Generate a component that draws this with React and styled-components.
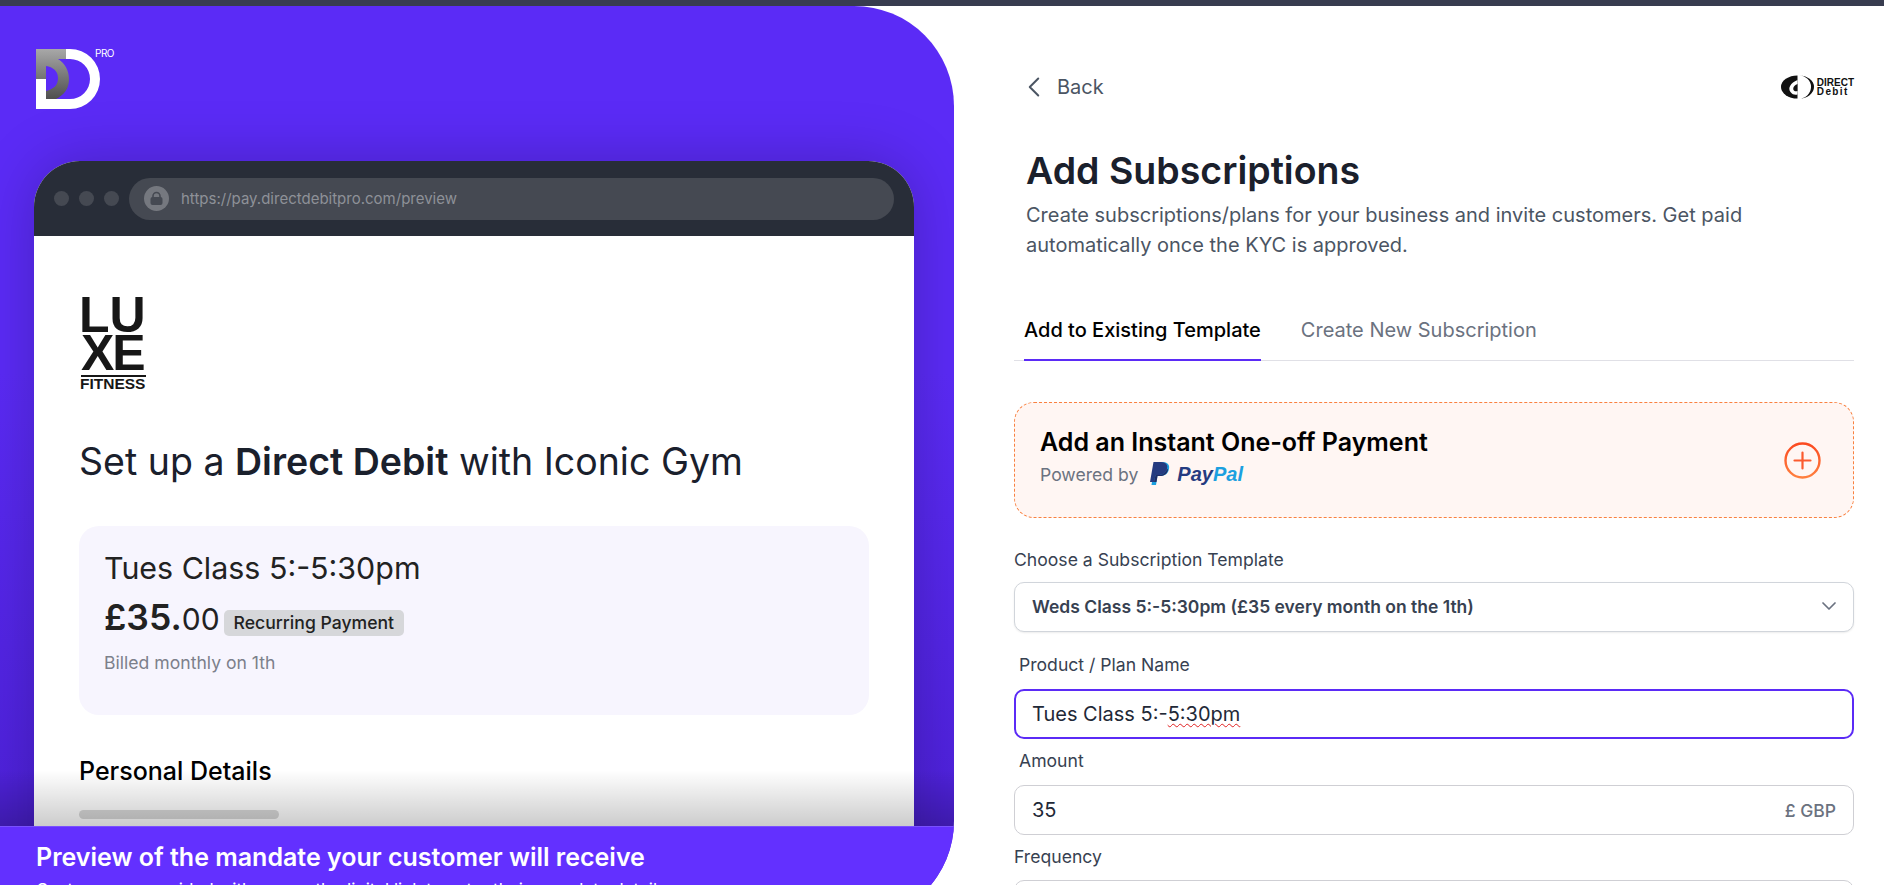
import React from "react";
import styled, { createGlobalStyle } from "styled-components";
import { ChevronLeft, ChevronDown } from "lucide-react";

const GlobalStyle = createGlobalStyle`
  html, body {
    margin: 0;
    height: 885px;
    overflow: hidden;
    background: #fff;
    font-family: Inter, "Liberation Sans", sans-serif;
  }
  * { box-sizing: border-box; }
`;

const App = () => {
  return (
    <Page>
      <GlobalStyle />
      <TopBar />
      <Split>
        <PreviewPanel>
          <BrandLogo>
            <svg width="64" height="60" viewBox="0 0 64 60">
              <defs>
                <linearGradient id="ddGrey" x1="0" y1="0" x2="0" y2="1">
                  <stop offset="0" stopColor="#a8a8a8" />
                  <stop offset="1" stopColor="#4f4f4f" />
                </linearGradient>
              </defs>
              <path d="M30 0H34A30 30 0 0 1 34 60H0V30H10V50H34A20 20 0 0 0 34 10H30Z" fill="#fff" />
              <path d="M0 0H30V10H22C29 14 33 22 33 30C33 40 28 46 20 50H10V42C18 40 22 36 22 29C22 22 17 18 10 17V30H0Z" fill="url(#ddGrey)" />
            </svg>
            <ProBadge>PRO</ProBadge>
          </BrandLogo>
          <BrowserFrame>
            <BrowserBar>
              <Dots>
                <Dot />
                <Dot />
                <Dot />
              </Dots>
              <UrlPill>
                <LockCircle>
                  <svg width="15" height="15" viewBox="0 0 15 15">
                    <path d="M4 6.5V5a3.5 3.5 0 0 1 7 0v1.5" fill="none" stroke="#454952" strokeWidth="1.6" />
                    <rect x="1.5" y="6" width="12" height="8" rx="2" fill="#454952" />
                  </svg>
                </LockCircle>
                <UrlText>https://pay.directdebitpro.com/preview</UrlText>
              </UrlPill>
            </BrowserBar>
            <BrowserBody>
              <LuxeLogo>
                <LuxeBig>LU</LuxeBig>
                <LuxeBig>XE</LuxeBig>
                <LuxeSmall>FITNESS</LuxeSmall>
              </LuxeLogo>
              <Headline>
                Set up a <strong>Direct Debit</strong> with Iconic Gym
              </Headline>
              <SummaryBox>
                <PlanName>Tues Class 5:-5:30pm</PlanName>
                <PriceRow>
                  <Price>
                    £35.<Pence>00</Pence>
                  </Price>
                  <Badge>Recurring Payment</Badge>
                </PriceRow>
                <Billed>Billed monthly on 1th</Billed>
              </SummaryBox>
              <SectionTitle>Personal Details</SectionTitle>
              <Skeleton />
            </BrowserBody>
          </BrowserFrame>
          <Fade />
          <Caption>
            <CaptionTitle>Preview of the mandate your customer will receive</CaptionTitle>
            <CaptionText>Customers are guided with a smooth, digital link to enter their complete details</CaptionText>
          </Caption>
        </PreviewPanel>
        <FormPanel>
          <TopRow>
            <BackLink>
              <ChevronLeft size={34} strokeWidth={1.4} />
              Back
            </BackLink>
            <DebitMark>
              <svg width="35" height="24" viewBox="0 0 34 24">
                <path d="M17 .5A16.5 11.5 0 0 0 17 23.5Z" fill="#111" />
                <path d="M18.5 .5A15 11.5 0 0 1 18.5 23.5A11.5 11 0 0 0 18.5 .5Z" fill="#111" />
                <path d="M17 5C10 8 7 13 10 17C12 20 15 20 17 19.5Z" fill="#fff" />
                <path d="M17 9C14 10 12 12.5 13 15C13.8 16.5 15.5 16.5 17 16Z" fill="#111" />
              </svg>
              <DebitText>
                <span>DIRECT</span>
                <span>Debit</span>
              </DebitText>
            </DebitMark>
          </TopRow>
          <Title>Add Subscriptions</Title>
          <Intro>
            Create subscriptions/plans for your business and invite customers. Get paid automatically once the KYC is
            approved.
          </Intro>
          <Tabs>
            <Tab $active>Add to Existing Template</Tab>
            <Tab>Create New Subscription</Tab>
          </Tabs>
          <PaymentCard>
            <CardText>
              <CardTitle>Add an Instant One-off Payment</CardTitle>
              <PoweredRow>
                Powered by
                <PayPalLogo>
                  <svg width="20" height="24" viewBox="0 0 20 24">
                    <path d="M5 0H12.5C17.5 0 20 3 19 7C18 12 14.5 14 10 14H7.5L6 23H1.5Z" fill="#1ba0e0" />
                    <path d="M3.5 0H11C16 0 18 3 17 6.5C16 11 12.5 13 8 13H5.5L4 20H0Z" fill="#253b80" />
                    <path d="M5.5 13H8C12.5 13 16 11 17 6.5C17.6 7 18 7.5 18 8C17 12 14 14 10 14H7.5L6.5 20H4Z" fill="#222d65" />
                  </svg>
                  <PayWord>
                    Pay<PalPart>Pal</PalPart>
                  </PayWord>
                </PayPalLogo>
              </PoweredRow>
            </CardText>
            <svg width="37" height="37" viewBox="0 0 37 37">
              <defs>
                <linearGradient id="plusRing" x1="0" y1="0" x2="0" y2="1">
                  <stop offset="0" stopColor="#fb4a20" />
                  <stop offset="1" stopColor="#ff7f3e" />
                </linearGradient>
              </defs>
              <circle cx="18.5" cy="18.5" r="17" fill="none" stroke="url(#plusRing)" strokeWidth="2.4" />
              <path d="M10.5 18.5H26.5M18.5 10.5V26.5" stroke="#fb5a2e" strokeWidth="2.2" strokeLinecap="round" />
            </svg>
          </PaymentCard>
          <FieldLabel $top={32} $bottom={12}>
            Choose a Subscription Template
          </FieldLabel>
          <SelectBox>
            <SelectValue>Weds Class 5:-5:30pm (£35 every month on the 1th)</SelectValue>
            <ChevronDown size={24} strokeWidth={1.75} color="#6b7280" />
          </SelectBox>
          <FieldLabel $inset $top={23} $bottom={14}>
            Product / Plan Name
          </FieldLabel>
          <TextBox $focused>
            <span>
              Tues Class 5:-<Misspelt>5:30pm</Misspelt>
            </span>
          </TextBox>
          <FieldLabel $inset $top={12} $bottom={14}>
            Amount
          </FieldLabel>
          <TextBox>
            <span>35</span>
            <Suffix>£ GBP</Suffix>
          </TextBox>
          <FieldLabel $top={12} $bottom={13}>
            Frequency
          </FieldLabel>
          <TextBox />
        </FormPanel>
      </Split>
    </Page>
  );
};

const Page = styled.div`
  height: 885px;
  overflow: hidden;
  display: flex;
  flex-direction: column;
`;
const TopBar = styled.div`
  height: 6px;
  flex: none;
  background: #383c4f;
`;
const Split = styled.div`
  flex: 1;
  min-height: 0;
  display: flex;
  align-items: flex-start;
`;

const PreviewPanel = styled.section`
  position: relative;
  width: 954px;
  flex: none;
  height: 915px;
  overflow: hidden;
  padding: 43px 40px 0 34px;
  background: linear-gradient(180deg, #5b2bf6 0%, #5b2bf6 40%, #4f22dc 85%);
  border-radius: 0 100px 100px 0;
`;
const BrandLogo = styled.div`
  position: relative;
  width: 64px;
  height: 60px;
  margin-left: 2px;
  margin-bottom: 52px;
  svg {
    display: block;
  }
`;
const ProBadge = styled.span`
  position: absolute;
  left: 59px;
  top: -2px;
  font-size: 10px;
  letter-spacing: -0.5px;
  color: #fff;
`;
const BrowserFrame = styled.div`
  width: 880px;
  height: 740px;
  background: #fff;
  border-radius: 46px 46px 0 0;
  overflow: hidden;
  box-shadow: 0 0 60px rgba(0, 0, 0, 0.22);
`;
const BrowserBar = styled.div`
  height: 75px;
  background: #282d38;
  display: flex;
  align-items: center;
  padding: 0 20px;
  gap: 10px;
`;
const Dots = styled.div`
  display: flex;
  gap: 10px;
`;
const Dot = styled.span`
  width: 15px;
  height: 15px;
  border-radius: 50%;
  background: #454952;
`;
const UrlPill = styled.div`
  flex: 1;
  height: 42px;
  border-radius: 21px;
  background: #454952;
  display: flex;
  align-items: center;
  padding-left: 15px;
  gap: 12px;
`;
const LockCircle = styled.span`
  width: 25px;
  height: 25px;
  border-radius: 50%;
  background: #75787f;
  display: flex;
  align-items: center;
  justify-content: center;
`;
const UrlText = styled.span`
  font-size: 15px;
  color: #8e9198;
`;
const BrowserBody = styled.div`
  padding: 60px 45px 0;
`;
const LuxeLogo = styled.div`
  width: 66px;
  margin-left: 2px;
  color: #171717;
  font-family: "Liberation Sans", sans-serif;
  display: flex;
  flex-direction: column;
`;
const LuxeBig = styled.div`
  font-size: 50px;
  line-height: 38px;
  height: 38px;
  font-weight: 700;
  margin-left: -2px;
  white-space: nowrap;
  &:nth-child(2) {
    border-bottom: 2px solid #171717;
    height: 43px;
    margin-left: 0;
    margin-right: 1px;
    letter-spacing: -2px;
  }
`;
const LuxeSmall = styled.div`
  font-size: 15.5px;
  line-height: 14px;
  font-weight: 700;
  margin-left: -1px;
  white-space: nowrap;
`;
const Headline = styled.h2`
  margin: 49px 0 0;
  font-size: 37.5px;
  line-height: 44px;
  font-weight: 400;
  color: #1a202c;
  strong {
    font-weight: 600;
  }
`;
const SummaryBox = styled.div`
  margin-top: 42px;
  height: 189px;
  padding: 22px 25px;
  background: #f7f5fe;
  border-radius: 20px;
`;
const PlanName = styled.div`
  font-size: 30.4px;
  line-height: 40px;
  color: #222;
`;
const PriceRow = styled.div`
  display: flex;
  align-items: center;
  gap: 4px;
  margin-top: 8px;
`;
const Price = styled.div`
  font-size: 35.5px;
  line-height: 44px;
  font-weight: 600;
  color: #222;
`;
const Pence = styled.span`
  font-size: 30px;
  font-weight: 400;
`;
const Badge = styled.span`
  padding: 0 10px;
  height: 26px;
  margin-top: 9px;
  border-radius: 5px;
  background: #d6d7da;
  font-size: 17.6px;
  line-height: 26px;
  font-weight: 500;
  color: #222;
`;
const Billed = styled.div`
  margin-top: 10px;
  font-size: 17.6px;
  line-height: 24px;
  color: #7c808b;
`;
const SectionTitle = styled.h3`
  margin: 41px 0 0;
  font-size: 25px;
  line-height: 30px;
  font-weight: 500;
  color: #000;
`;
const Skeleton = styled.div`
  margin-top: 24px;
  width: 200px;
  height: 9px;
  border-radius: 5px;
  background: #d8d8d8;
`;
const Fade = styled.div`
  position: absolute;
  left: 0;
  right: 0;
  top: 764px;
  height: 56px;
  background: linear-gradient(180deg, rgba(0, 0, 0, 0) 0%, rgba(0, 0, 0, 0.2) 100%);
`;
const Caption = styled.div`
  position: absolute;
  left: 0;
  right: 0;
  top: 820px;
  bottom: 0;
  padding: 14px 36px 0;
  background: #6330ff;
  border-top: 1px solid #7a50ff;
`;
const CaptionTitle = styled.div`
  font-size: 25px;
  line-height: 32px;
  font-weight: 600;
  color: #fff;
  white-space: nowrap;
`;
const CaptionText = styled.div`
  margin-top: 5px;
  font-size: 17px;
  line-height: 24px;
  color: #fff;
  white-space: nowrap;
`;

const FormPanel = styled.section`
  flex: 1;
  min-width: 0;
  padding: 64px 30px 0 60px;
`;
const TopRow = styled.div`
  display: flex;
  align-items: center;
  justify-content: space-between;
  height: 34px;
  padding-left: 3px;
`;
const BackLink = styled.div`
  display: flex;
  align-items: center;
  gap: 6px;
  font-size: 20px;
  color: #4b5563;
`;
const DebitMark = styled.div`
  display: flex;
  align-items: center;
  gap: 2px;
  svg {
    display: block;
  }
`;
const DebitText = styled.div`
  display: flex;
  flex-direction: column;
  font-family: "Liberation Sans", sans-serif;
  font-size: 10px;
  line-height: 9px;
  font-weight: 700;
  color: #111;
  span:last-child {
    letter-spacing: 1.4px;
  }
`;
const Title = styled.h1`
  margin: 45px 0 0 12px;
  font-size: 37.5px;
  line-height: 44px;
  font-weight: 600;
  color: #1a202c;
`;
const Intro = styled.p`
  margin: 7px 0 0 12px;
  font-size: 20px;
  line-height: 30px;
  color: #4b5563;
  max-width: 780px;
`;
const Tabs = styled.div`
  display: flex;
  gap: 40px;
  margin-top: 56px;
  padding-left: 10px;
  border-bottom: 1px solid #e0e0e6;
`;
const Tab = styled.div`
  padding: 0 0 15px;
  font-size: 20px;
  line-height: 28px;
  font-weight: ${(p) => (p.$active ? 500 : 400)};
  color: ${(p) => (p.$active ? "#000" : "#6b7280")};
  border-bottom: 2px solid ${(p) => (p.$active ? "#5b2bf6" : "transparent")};
  margin-bottom: -1px;
`;
const PaymentCard = styled.div`
  margin-top: 41px;
  height: 116px;
  padding: 0 32px 0 25px;
  display: flex;
  align-items: center;
  justify-content: space-between;
  background: #fff6f3;
  border: 1px dashed #f98140;
  border-radius: 20px;
  svg {
    display: block;
  }
`;
const CardText = styled.div`
  padding-bottom: 8px;
`;
const CardTitle = styled.div`
  font-size: 25px;
  line-height: 32px;
  font-weight: 600;
  color: #000;
`;
const PoweredRow = styled.div`
  display: flex;
  align-items: center;
  gap: 12px;
  margin-top: 4px;
  font-size: 17.6px;
  color: #6b7280;
`;
const PayPalLogo = styled.span`
  display: flex;
  align-items: center;
  gap: 7px;
`;
const PayWord = styled.span`
  font-family: "Liberation Sans", sans-serif;
  font-style: italic;
  font-weight: 700;
  font-size: 20px;
  color: #253b80;
`;
const PalPart = styled.span`
  color: #1ba0e0;
`;
const FieldLabel = styled.label`
  display: block;
  margin: ${(p) => p.$top}px 0 ${(p) => p.$bottom}px ${(p) => (p.$inset ? "5px" : "0")};
  font-size: 17.6px;
  line-height: 20px;
  font-weight: 400;
  color: #374151;
`;
const SelectBox = styled.div`
  height: 50px;
  display: flex;
  align-items: center;
  justify-content: space-between;
  padding: 0 12px 2px 17px;
  background: #fff;
  border: 1px solid #d1d5db;
  border-radius: 10px;
  box-shadow: 0 1px 2px rgba(0, 0, 0, 0.08);
`;
const SelectValue = styled.span`
  font-size: 17.5px;
  font-weight: 600;
  color: #374151;
`;
const TextBox = styled.div`
  height: 50px;
  display: flex;
  align-items: center;
  justify-content: space-between;
  padding: 0 ${(p) => (p.$focused ? "16px" : "17px")};
  background: #fff;
  border: ${(p) => (p.$focused ? "2px solid #5b2bf6" : "1px solid #cfcfd4")};
  border-radius: 10px;
  font-size: 20px;
  color: #1f2937;
`;
const Misspelt = styled.span`
  text-decoration: underline wavy #e02020 1px;
  text-underline-offset: 2px;
`;
const Suffix = styled.span`
  font-size: 17.5px;
  font-weight: 500;
  color: #6b7280;
`;

export default App;
